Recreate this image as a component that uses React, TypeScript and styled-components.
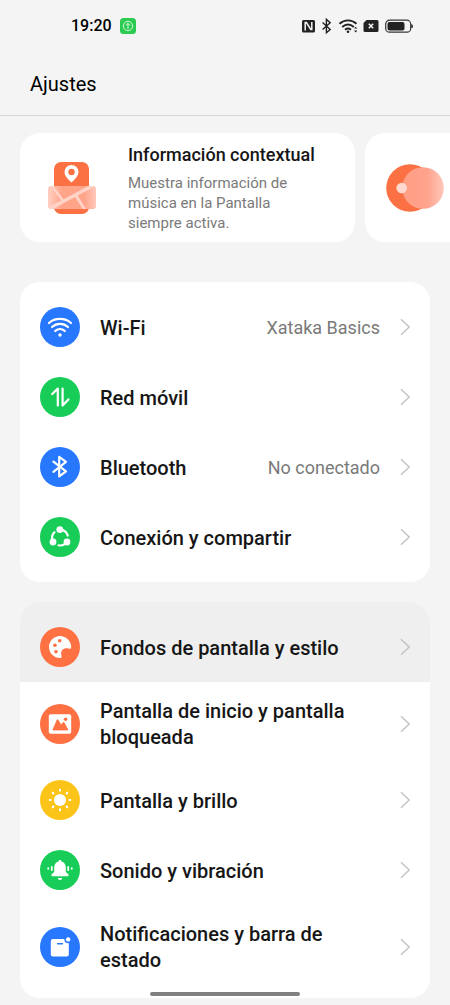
import React from 'react';
import styled, { createGlobalStyle } from 'styled-components';

const GlobalStyle = createGlobalStyle`
  *, *::before, *::after { box-sizing: border-box; }
  body {
    margin: 0;
    background: #f4f4f4;
    color: #161616;
    font-family: Roboto, 'Liberation Sans', sans-serif;
  }
`;

const Page = styled.div`
  overflow-x: hidden;
  padding-bottom: 7px;
`;

const StatusBar = styled.div`
  display: flex;
  align-items: center;
  justify-content: space-between;
  height: 52px;
  padding: 0 36px 0 71px;
`;

const StatusGroup = styled.div<{ $gap: number }>`
  display: flex;
  align-items: center;
  gap: ${(p) => p.$gap}px;
`;

const Clock = styled.time`
  font-size: 16px;
  font-weight: 500;
  line-height: 20px;
  color: #000;
`;

const Header = styled.header`
  padding: 20px 30px 19px;
  border-bottom: 1px solid #d8d8d8;
`;

const Title = styled.h1`
  margin: 0;
  font-size: 20px;
  font-weight: 400;
  line-height: 24px;
  color: #000;
`;

const Content = styled.main`
  padding: 17px 20px 0;
`;

const Carousel = styled.section`
  display: flex;
  gap: 10px;
  margin-bottom: 40px;
`;

const TipCard = styled.article`
  flex: 0 0 calc(100% - 75px);
  display: flex;
  align-items: center;
  gap: 31px;
  min-height: 109px;
  padding: 11px 20px 9px;
  border-radius: 20px;
  background: #fff;
`;

const TipArt = styled.svg`
  flex: none;
`;

const MapArt = styled(TipArt)`
  margin-left: 7px;
`;

const TipBody = styled.div`
  flex: 1;
  min-width: 0;
`;

const TipTitle = styled.h2`
  margin: 0 0 7px;
  font-size: 18px;
  font-weight: 500;
  line-height: 22px;
`;

const TipText = styled.p`
  margin: 0;
  max-width: 180px;
  font-size: 15px;
  line-height: 20px;
  color: #7a7a7a;
`;

const Group = styled.ul`
  margin: 0 0 20px;
  padding: 0;
  list-style: none;
  border-radius: 20px;
  background: #fff;
  overflow: hidden;

  &:last-child { margin-bottom: 0; }
`;

const Item = styled.li<{ $active?: boolean }>`
  background: ${(p) => (p.$active ? '#efefef' : 'transparent')};

  &:first-child { padding-top: 10px; }
  &:last-child { padding-bottom: 10px; }
`;

const Row = styled.a`
  display: flex;
  align-items: center;
  gap: 20px;
  min-height: 70px;
  padding: 15px 20px;
  color: inherit;
  text-decoration: none;
`;

const Badge = styled.span<{ $color: string }>`
  flex: none;
  width: 40px;
  height: 40px;
  border-radius: 50%;
  background: ${(p) => p.$color};

  svg { display: block; }
`;

const Label = styled.span`
  flex: 1;
  padding-top: 1px;
  font-size: 20px;
  font-weight: 500;
  line-height: 26px;
`;

const Value = styled.span`
  padding-top: 1px;
  font-size: 18px;
  line-height: 26px;
  color: #7a7a7a;
`;

const HomeBar = styled.div`
  position: fixed;
  bottom: 9px;
  left: 50%;
  width: 150px;
  height: 4px;
  margin-left: -75px;
  border-radius: 2px;
  background: #808080;
`;

const BLUE = '#2878ff';
const GREEN = '#18cd57';
const ORANGE = '#ff7043';
const YELLOW = '#fcc419';

const Glyph = ({ children }: { children: React.ReactNode }) => (
  <svg width="40" height="40" viewBox="0 0 40 40" fill="none" aria-hidden="true">
    {children}
  </svg>
);

const stroke = { stroke: '#fff', strokeWidth: 2.2, strokeLinecap: 'round', strokeLinejoin: 'round' } as const;

const WifiGlyph = () => (
  <Glyph>
    <g {...stroke}>
      <path d="M9 16C15 10.6 25 10.6 31 16" />
      <path d="M12 20C16.6 15.9 23.4 15.9 28 20" />
      <path d="M15.2 24C18 21.6 22 21.6 24.8 24" />
    </g>
    <circle cx="20" cy="28" r="1.7" fill="#fff" />
  </Glyph>
);

const DataGlyph = () => (
  <Glyph>
    <g {...stroke}>
      <path d="M12.2 17L17.8 11.6V28.6" />
      <path d="M22.6 11.6V28.6L28.4 22.4" />
    </g>
  </Glyph>
);

const BluetoothGlyph = () => (
  <Glyph>
    <path {...stroke} d="M13.4 14.6L26 24.4L19.2 29.4V9.800L26 14.8L13.4 24.8" />
  </Glyph>
);

const ShareGlyph = () => (
  <Glyph>
    <g {...stroke}>
      <path d="M20 12.600C23.800 12.800 26.800 15 27.800 18.600" />
      <path d="M26.600 25.200C24.800 27.800 22 28.800 18.600 28.400" />
      <path d="M12.800 24.600C11.400 21 12 17.600 14.400 15.200" />
    </g>
    <circle cx="19.800" cy="12.600" r="3.400" fill="#fff" />
    <circle cx="13" cy="25" r="3.400" fill="#fff" />
    <circle cx="27" cy="25" r="3.400" fill="#fff" />
  </Glyph>
);

const PaletteGlyph = () => (
  <Glyph>
    <path
      d="M20.6 31C14 31.2 9 26.2 9 20C9 14 13.8 9 20 9C26.2 9 31.2 14 31.2 20C31.2 21.8 30.2 22 28.6 21.5C24.4 20.2 20.6 22.8 21.2 27C21.4 28.8 22.2 30.8 20.6 31Z"
      fill="#fff"
    />
    <g fill={ORANGE}>
      <circle cx="19.7" cy="13.7" r="1.8" />
      <circle cx="15" cy="18.3" r="1.8" />
      <circle cx="16" cy="24.8" r="1.8" />
    </g>
  </Glyph>
);

const PictureGlyph = () => (
  <Glyph>
    <rect x="8.8" y="10.3" width="22.4" height="19.4" rx="2" fill="#fff" />
    <path
      d="M12.8 26L17 16.2Q17.6 15 18.2 16.2L21.2 21.2L22.8 18.8Q23.5 18 24.2 18.8L28 26Z"
      fill={ORANGE}
      stroke={ORANGE}
      strokeWidth="0.8"
      strokeLinejoin="round"
    />
    <circle cx="25.6" cy="15.2" r="1.8" fill={ORANGE} />
  </Glyph>
);

const SunGlyph = () => (
  <Glyph>
    <circle cx="20" cy="20" r="6" fill="#fff" />
    {[0, 45, 90, 135, 180, 225, 270, 315].map((angle) => (
      <path key={angle} {...stroke} d="M20 10.6V9.800" transform={`rotate(${angle} 20 20)`} />
    ))}
  </Glyph>
);

const BellGlyph = () => (
  <Glyph>
    <path
      d="M20 10C21 10 21.4 10.6 21.5 11.5C24.4 12.2 25.8 14.6 25.8 17.6V21.6C25.8 23 28.6 23.6 28.6 25.2Q28.6 26.2 27.6 26.2H12.4Q11.4 26.2 11.4 25.2C11.4 23.6 14.2 23 14.2 21.6V17.6C14.2 14.6 15.6 12.2 18.5 11.5C18.6 10.6 19 10 20 10Z"
      fill="#fff"
    />
    <path d="M17.8 28H22.2C21.8 29.4 21 30 20 30C19 30 18.2 29.4 17.8 28Z" fill="#fff" />
    <g stroke="#fff" strokeWidth="1.8" strokeLinecap="round">
      <path d="M11.8 17V20" />
      <path d="M28.2 17V20" />
      <path d="M8.2 18.2V18.8" />
      <path d="M31.8 18.2V18.8" />
    </g>
  </Glyph>
);

const NoticeGlyph = () => (
  <Glyph>
    <rect x="10.8" y="12" width="18" height="17.4" rx="2" fill="#fff" />
    <circle cx="28.2" cy="12.4" r="3.8" fill={BLUE} />
    <circle cx="28.2" cy="12.4" r="2.2" fill="#fff" />
    <path d="M17.6 16.8H22.4" stroke={BLUE} strokeWidth="1.6" strokeLinecap="round" />
  </Glyph>
);

const Chevron = () => (
  <svg width="10" height="18" viewBox="0 0 10 18" fill="none" aria-hidden="true">
    <path d="M1 1.2L9.2 9L1 16.8" stroke="#c4c4c4" strokeWidth="1.5" />
  </svg>
);

const MapIllustration = () => (
  <MapArt width="50" height="55" viewBox="0 0 50 55" fill="none" aria-hidden="true">
    <defs>
      <linearGradient id="mapFill" x1="0" y1="0" x2="1" y2="0">
        <stop offset="0" stopColor="#ffcfc2" />
        <stop offset="0.3" stopColor="#ffa389" />
        <stop offset="0.75" stopColor="#ffa389" />
        <stop offset="1" stopColor="#ffc9bb" />
      </linearGradient>
      <clipPath id="mapClip">
        <rect x="1" y="25" width="48" height="23" rx="3" />
      </clipPath>
    </defs>
    <rect x="7" y="1" width="35" height="52" rx="7" fill="#fb7144" />
    <path
      d="M24.5 21.4C21 18 17.5 15 17.5 11A7 7 0 0 1 31.5 11C31.5 15 28 18 24.5 21.4Z"
      fill="#fff"
    />
    <circle cx="24.5" cy="11" r="3.2" fill="#fb7144" />
    <g clipPath="url(#mapClip)">
      <rect x="1" y="25" width="48" height="23" fill="url(#mapFill)" />
      <g stroke="#ffd3c7">
        <path d="M4 24L17 41" strokeWidth="2.5" />
        <path d="M28 33L38 49" strokeWidth="3" />
        <path d="M2 48L47 24" strokeWidth="3.5" />
      </g>
    </g>
  </MapArt>
);

const ToggleIllustration = () => (
  <TipArt width="60" height="50" viewBox="0 0 60 50" fill="none" aria-hidden="true">
    <defs>
      <linearGradient id="discFill" x1="0" y1="0" x2="1" y2="0">
        <stop offset="0" stopColor="#ff9f84" />
        <stop offset="0.6" stopColor="#ffa38d" />
        <stop offset="1" stopColor="#ffc7ba" />
      </linearGradient>
    </defs>
    <circle cx="25" cy="24" r="23.8" fill="#fb7144" />
    <circle cx="38" cy="24" r="20.8" fill="url(#discFill)" />
    <circle cx="16.7" cy="24" r="5.3" fill="#ffd9ce" />
  </TipArt>
);

const UploadBadge = () => (
  <svg width="16" height="16" viewBox="0 0 16 16" fill="none" aria-hidden="true">
    <rect width="16" height="16" rx="3.5" fill="#2bcb52" />
    <circle cx="8" cy="8" r="4.7" stroke="#d8f7df" strokeWidth="1" />
    <path d="M8 11V5.4M5.9 7.4L8 5.3L10.1 7.4" stroke="#d8f7df" strokeWidth="1" />
  </svg>
);

const StatusIcons = () => (
  <svg width="112" height="18" viewBox="0 0 112 18" fill="none" aria-hidden="true">
    <rect x="0" y="3" width="13" height="12.5" rx="1.5" fill="#222" />
    <path d="M3.2 13.4V5.6H4.4L8.8 12.4H9.8V5" stroke="#f4f4f4" strokeWidth="1.5" />
    <path d="M20.6 5.6L28.2 12.4L24.4 15.8V2.4L28.2 5.8L20.6 12.6" stroke="#222" strokeWidth="1.4" />
    <g stroke="#222" strokeWidth="1.9">
      <path d="M37.5 6.8C42.5 2.2 49.5 2.2 54.5 6.8" />
      <path d="M40.2 10C43.8 6.8 48.2 6.8 51.8 10" />
      <path d="M43 12.8C45 11.2 47 11.2 49 12.8" />
    </g>
    <circle cx="46" cy="14.8" r="1.3" fill="#222" />
    <path d="M52 11.6L53.7 9.8L55.4 11.6ZM52 13.6L53.7 15.4L55.4 13.6Z" fill="#222" />
    <path d="M64.5 3H75Q76.5 3 76.5 4.5V13.5Q76.5 15 75 15H63Q61.5 15 61.5 13.5V6Z" fill="#222" />
    <path d="M66.8 6.8L71.2 11.2M71.2 6.8L66.8 11.2" stroke="#f4f4f4" strokeWidth="1.5" />
    <rect x="83.7" y="3.2" width="25" height="12" rx="3.8" stroke="#333" strokeWidth="1.2" />
    <rect x="85.5" y="5" width="17" height="8.4" rx="2" fill="#222" />
    <path d="M109.8 7.5Q111.4 9.2 109.8 11Z" fill="#222" stroke="#222" strokeWidth="0.8" />
  </svg>
);

type Setting = {
  label: string;
  color: string;
  icon: React.ReactNode;
  value?: string;
  active?: boolean;
};

const groups: Setting[][] = [
  [
    { label: 'Wi-Fi', color: BLUE, icon: <WifiGlyph />, value: 'Xataka Basics' },
    { label: 'Red móvil', color: GREEN, icon: <DataGlyph /> },
    { label: 'Bluetooth', color: BLUE, icon: <BluetoothGlyph />, value: 'No conectado' },
    { label: 'Conexión y compartir', color: GREEN, icon: <ShareGlyph /> },
  ],
  [
    { label: 'Fondos de pantalla y estilo', color: ORANGE, icon: <PaletteGlyph />, active: true },
    { label: 'Pantalla de inicio y pantalla bloqueada', color: ORANGE, icon: <PictureGlyph /> },
    { label: 'Pantalla y brillo', color: YELLOW, icon: <SunGlyph /> },
    { label: 'Sonido y vibración', color: GREEN, icon: <BellGlyph /> },
    { label: 'Notificaciones y barra de estado', color: BLUE, icon: <NoticeGlyph /> },
  ],
];

export default function App() {
  return (
    <Page>
      <GlobalStyle />
      <StatusBar>
        <StatusGroup $gap={8}>
          <Clock>19:20</Clock>
          <UploadBadge />
        </StatusGroup>
        <StatusIcons />
      </StatusBar>
      <Header>
        <Title>Ajustes</Title>
      </Header>
      <Content>
        <Carousel>
          <TipCard>
            <MapIllustration />
            <TipBody>
              <TipTitle>Información contextual</TipTitle>
              <TipText>Muestra información de música en la Pantalla siempre activa.</TipText>
            </TipBody>
          </TipCard>
          <TipCard>
            <ToggleIllustration />
          </TipCard>
        </Carousel>
        {groups.map((items, index) => (
          <Group key={index}>
            {items.map((item) => (
              <Item key={item.label} $active={item.active}>
                <Row href="#">
                  <Badge $color={item.color}>{item.icon}</Badge>
                  <Label>{item.label}</Label>
                  {item.value && <Value>{item.value}</Value>}
                  <Chevron />
                </Row>
              </Item>
            ))}
          </Group>
        ))}
      </Content>
      <HomeBar />
    </Page>
  );
}
